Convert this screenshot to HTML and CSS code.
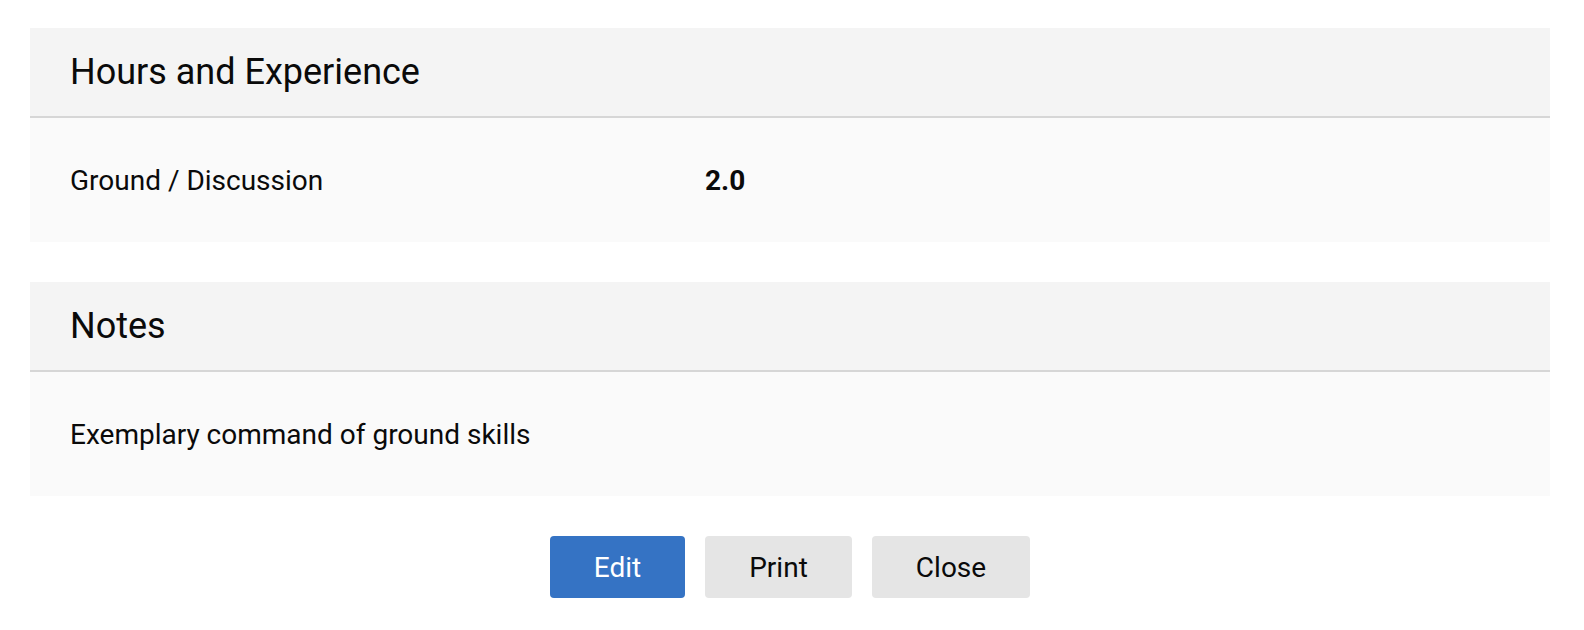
FILE: index.html
```html
<!DOCTYPE html>
<html lang="en-US">
  <head>
    <title>Lesson</title>
    <meta charset="utf-8" />
    <link rel="stylesheet" href="styles.css">
  </head>
  <body>
    <div class="page">
      <div class="card">
        <div class="cardHead">
          <h2>Hours and Experience</h2>
        </div>
        <div class="cardBody">
          <div class="row">
            <span class="label">Ground / Discussion</span>
            <span class="value">2.0</span>
          </div>
        </div>
      </div>
      <div class="card">
        <div class="cardHead">
          <h2>Notes</h2>
        </div>
        <div class="cardBody">
          <p class="notes">Exemplary command of ground skills</p>
        </div>
      </div>
      <div class="actions">
        <button class="btn edit">Edit</button>
        <button class="btn print">Print</button>
        <button class="btn close">Close</button>
      </div>
    </div>
  </body>
</html>
```

FILE: styles.css
```css
* {
  margin: 0;
  padding: 0;
  box-sizing: border-box;
}

body {
  background-color: #ffffff;
  font-family: Roboto, "Liberation Sans", sans-serif;
  color: #0a0a0a;
}

.page {
  padding: 28px 34px 0 30px;
}

.card {
  margin-bottom: 40px;
}

.cardHead {
  background-color: #f4f4f4;
  border-bottom: 2px solid #d6d6d6;
  height: 90px;
  display: flex;
  align-items: center;
  padding: 0 40px;
}

.cardHead h2 {
  font-size: 36px;
  font-weight: 400;
}

.cardBody {
  background-color: #fafafa;
  height: 124px;
  display: flex;
  align-items: center;
  padding: 0 40px;
  font-size: 28px;
}

.row {
  display: flex;
}

.label {
  width: 635px;
}

.value {
  font-weight: 700;
}

.actions {
  display: flex;
  justify-content: center;
  gap: 20px;
  margin-top: 4px;
}

.btn {
  border: none;
  border-radius: 4px;
  height: 62px;
  font-family: Roboto, "Liberation Sans", sans-serif;
  font-size: 28px;
  background-color: #e5e5e5;
  color: #0a0a0a;
}

.edit {
  width: 135px;
  background-color: #3573c4;
  color: #ffffff;
}

.print {
  width: 147px;
}

.close {
  width: 158px;
}
```
